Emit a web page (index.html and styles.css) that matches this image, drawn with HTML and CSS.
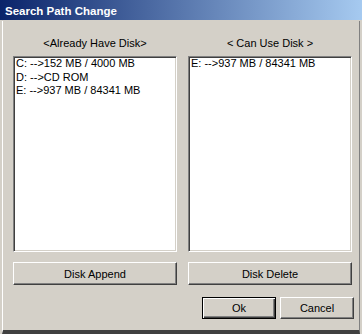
FILE: index.html
```html
<!DOCTYPE html>
<html lang="en">
<head>
  <meta charset="UTF-8">
  <title>Search Path Change</title>
  <link rel="stylesheet" href="styles.css">
</head>
<body>
  <div class="window">
    <div class="titlebar">Search Path Change</div>

    <div class="client">
      <div class="panes">
        <div class="pane">
          <div class="pane-label">&lt;Already Have Disk&gt;</div>
          <ul class="listbox">
            <li>C: --&gt;152 MB / 4000 MB</li>
            <li>D: --&gt;CD ROM</li>
            <li>E: --&gt;937 MB / 84341 MB</li>
          </ul>
          <button class="btn btn-wide">Disk Append</button>
        </div>

        <div class="pane">
          <div class="pane-label">&lt; Can Use Disk &gt;</div>
          <ul class="listbox">
            <li>E: --&gt;937 MB / 84341 MB</li>
          </ul>
          <button class="btn btn-wide">Disk Delete</button>
        </div>
      </div>

      <div class="actions">
        <button class="btn btn-default">Ok</button>
        <button class="btn">Cancel</button>
      </div>
    </div>
  </div>
</body>
</html>
```

FILE: styles.css
```css
/* Reset */
* {
    margin: 0;
    padding: 0;
    box-sizing: border-box;
}

body {
    width: 362px;
    height: 334px;
    overflow: hidden;
    background: #d4d0c8;
    font-family: "Liberation Sans", Arial, sans-serif;
    font-size: 11px;
    color: #000;
}

/* Window frame */
.window {
    width: 362px;
    height: 334px;
    display: flex;
    flex-direction: column;
}

.titlebar {
    height: 20px;
    padding: 3px 0 0 5px;
    line-height: 17px;
    font-size: 11.5px;
    font-weight: bold;
    color: #fff;
    background: linear-gradient(to right, #0a246a, #a6caf0);
}

.client {
    flex: 1;
    margin: 1px 2px 0 2px;
    padding: 15px 5px 0 10px;
    border-left: 1px solid #fff;
    border-right: 1px solid #808080;
    border-bottom: 4px solid #404040;
}

/* Two list panes */
.panes {
    display: grid;
    grid-template-columns: 164px 164px;
    column-gap: 11px;
}

.pane {
    display: flex;
    flex-direction: column;
}

.pane-label {
    height: 14px;
    line-height: 14px;
    text-align: center;
}

.listbox {
    list-style: none;
    height: 196px;
    margin-top: 6px;
    padding: 0 2px;
    line-height: 13.5px;
    background: #fff;
    border: 1px solid;
    border-color: #808080 #fff #fff #808080;
    box-shadow: inset 1px 1px #404040, inset -1px -1px #d4d0c8;
}

/* Buttons */
.btn {
    height: 22px;
    width: 74px;
    font-family: inherit;
    font-size: 11px;
    color: #000;
    background: #d4d0c8;
    border: 1px solid;
    border-color: #fff #404040 #404040 #fff;
    box-shadow: inset -1px -1px #808080;
}

.btn-wide {
    width: 100%;
    height: 23px;
    margin-top: 10px;
}

.btn-default {
    border: 1px solid #000;
    box-shadow: inset 1px 1px #fff, inset -1px -1px #404040, inset -2px -2px #808080;
}

.actions {
    display: flex;
    justify-content: flex-end;
    gap: 4px;
    margin-top: 12px;
}
```
